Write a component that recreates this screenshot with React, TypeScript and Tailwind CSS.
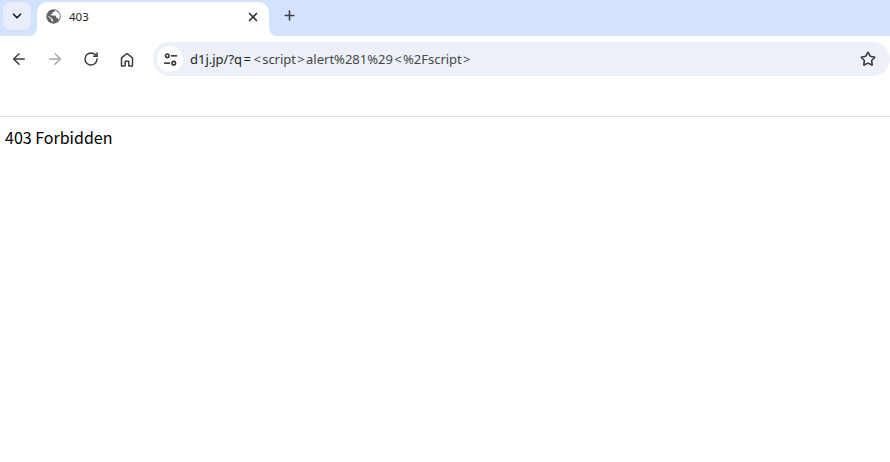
import { ArrowLeft, ArrowRight, ChevronDown, Plus, RotateCw, Star, X } from "lucide-react"

function Globe() {
  return (
    <svg width="15" height="15" viewBox="0 0 16 16" className="shrink-0">
      <circle cx="8" cy="8" r="7.700" fill="#5f6368" />
      <path
        d="M1.200 6.800 5.500 11v1l2 1.900v-2.400L4.500 8.500zM9 1.500v1.800H7v2H5.500v1.700h4.700l.8 1v1.500h1.300l1.200 2a6 6 0 0 0-.7-8.300H11.500V1.800z"
        fill="#ffffff"
      />
    </svg>
  )
}

function Tune() {
  return (
    <svg width="13" height="13" viewBox="0 0 16 16" fill="none" stroke="#303134" strokeWidth="1.900" className="shrink-0">
      <circle cx="4" cy="3.500" r="2.200" />
      <path d="M8.500 3.500H16" />
      <circle cx="12" cy="12.500" r="2.200" />
      <path d="M0 12.500h7.500" />
    </svg>
  )
}

function HomeIcon() {
  return (
    <svg width="14" height="15" viewBox="0 0 14 15" fill="none" stroke="#3c3c3c" strokeWidth="1.500" strokeLinejoin="round" className="ml-[21px] shrink-0">
      <path d="M1.500 14V5.800L7 1.500l5.500 4.300V14H8.800V9.300H5.200V14z" />
    </svg>
  )
}

export default function App() {
  return (
    <div className="h-[462px] w-[890px] overflow-hidden bg-white font-['Noto_Sans','Open_Sans',sans-serif] text-black">
      <div className="flex h-9 items-end bg-[#d3e3fd]">
        <div className="mb-[6px] ml-[3px] flex h-7 w-7 items-center justify-center rounded-lg bg-[#e8effb]">
          <ChevronDown size={14} strokeWidth={3} color="#1f1f1f" />
        </div>
        <div className="relative ml-[6px] flex h-[34px] w-[232px] items-center rounded-t-[10px] bg-white pb-[5px] pl-[9px] pr-[9px]">
          <span className="absolute -left-2 bottom-0 h-2 w-2 bg-white">
            <span className="block h-2 w-2 rounded-br-lg bg-[#d3e3fd]" />
          </span>
          <span className="absolute -right-2 bottom-0 h-2 w-2 bg-white">
            <span className="block h-2 w-2 rounded-bl-lg bg-[#d3e3fd]" />
          </span>
          <Globe />
          <span className="ml-[8px] flex-1 pt-[1px] text-[11.500px] leading-none text-[#1f1f1f]">403</span>
          <X size={14} strokeWidth={2.800} color="#303134" />
        </div>
        <div className="mb-[13px] ml-[13px]">
          <Plus size={15} strokeWidth={2.500} color="#3c3c3c" />
        </div>
      </div>

      <div className="flex h-[81px] items-start border-b border-[#e0e0e0] pt-[6px]">
        <div className="flex h-[34px] items-center pl-[10px]">
          <ArrowLeft size={18} strokeWidth={2} color="#3c3c3c" />
          <ArrowRight size={18} strokeWidth={2} color="#a8a8a8" className="ml-[18px]" />
          <RotateCw size={16} strokeWidth={2.200} color="#3c3c3c" className="ml-[19px]" />
          <HomeIcon />
        </div>
        <div className="ml-[19px] flex h-[34px] flex-1 items-center rounded-[17px] bg-[#ebf0f9] pl-[4px] pr-[14px]">
          <div className="flex h-[26px] w-[26px] items-center justify-center rounded-full bg-white">
            <Tune />
          </div>
          <span className="ml-[7px] flex-1 text-[13px] leading-none text-[#1f1f1f]">
            d1j.jp/?q<span className="mx-[1.300px]">=</span>
            <span className="text-[#474747]">
              <span className="mx-[1.300px]">{"<"}</span>script<span className="mx-[1.300px]">{">"}</span>alert%281%29<span className="mx-[1.300px]">{"<"}</span>%2Fscript<span className="mx-[1.300px]">{">"}</span>
            </span>
          </span>
          <Star size={16} strokeWidth={2.400} color="#3c3c3c" />
        </div>
      </div>

      <p className="pl-[5px] pt-[9px] font-['Noto_Sans_CJK_JP','Noto_Sans',sans-serif] text-base leading-[22px]">403 Forbidden</p>
    </div>
  )
}
